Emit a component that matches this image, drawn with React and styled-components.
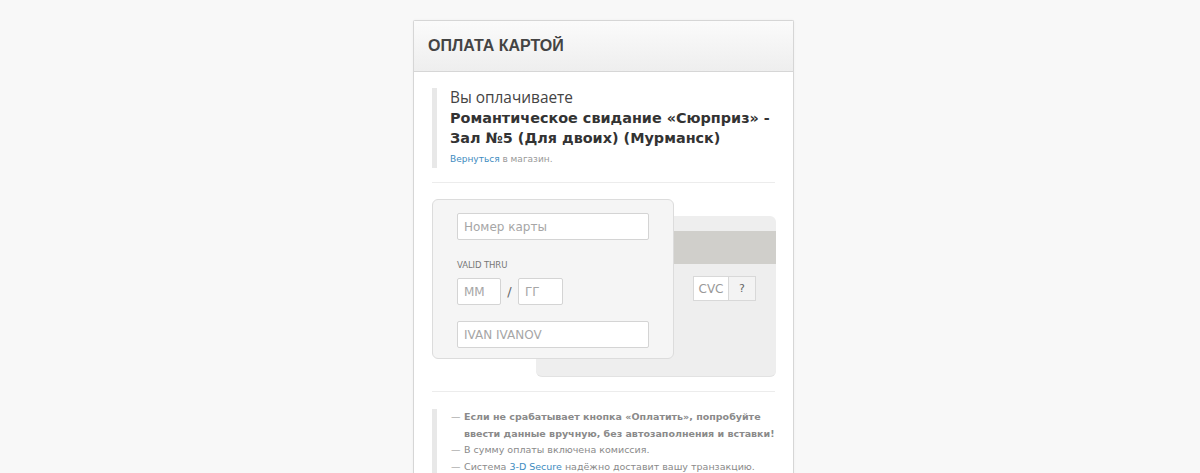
import React from 'react';
import styled, { createGlobalStyle } from 'styled-components';

const GlobalStyle = createGlobalStyle`
  html, body {
    margin: 0;
    padding: 0;
    background: #f8f8f8;
  }
  body {
    font-family: "DejaVu Sans", Verdana, sans-serif;
  }
`;

const Page = styled.div`
  display: flex;
  justify-content: center;
  padding-top: 20px;
  padding-left: 7px;
`;

const Panel = styled.div`
  width: 379px;
  background: #fff;
  border: 1px solid #d6d6d6;
  border-bottom: none;
  border-radius: 2px 2px 0 0;
  box-shadow: 0 0 3px rgba(0, 0, 0, 0.04);
`;

const Header = styled.div`
  height: 50px;
  display: flex;
  align-items: center;
  padding: 0 14px;
  background: linear-gradient(#fbfbfb, #eeeeee);
  border-bottom: 1px solid #d6d6d6;
`;

const Title = styled.h1`
  margin: 0;
  font-family: "Liberation Sans", Arial, sans-serif;
  font-size: 16px;
  font-weight: bold;
  color: #444;
`;

const Body = styled.div`
  padding: 16px 18px 0 18px;
`;

const Quote = styled.div`
  border-left: 5px solid #e8e8e8;
  padding-left: 13px;
  padding-bottom: ${(p) => p.$bottom || 0}px;
`;

const Lead = styled.div`
  font-family: "Open Sans", sans-serif;
  font-size: 15.4px;
  color: #444;
  line-height: 20px;
`;

const Product = styled.div`
  font-family: "DejaVu Sans", Verdana, sans-serif;
  font-weight: bold;
  font-size: 14.4px;
  line-height: 20px;
  color: #333;
`;

const Back = styled.div`
  margin-top: 4px;
  font-size: 9px;
  color: #999;
  line-height: 14px;
`;

const Link = styled.a`
  color: #3d8bc0;
  text-decoration: none;
`;

const Divider = styled.hr`
  border: none;
  border-top: 1px solid #ececec;
  margin: ${(p) => p.$m};
`;

const Cards = styled.div`
  display: grid;
  grid-template-columns: 1fr;
`;

const CardBack = styled.div`
  grid-area: 1 / 1;
  margin: 17px 0 0 104px;
  width: 240px;
  height: 161px;
  background: #eeeeee;
  border-radius: 6px;
  border-bottom: 1px solid #e2e2e2;
  box-sizing: border-box;
  padding-top: 15px;
  display: flex;
  flex-direction: column;
  align-items: flex-end;
`;

const Stripe = styled.div`
  align-self: stretch;
  height: 33px;
  background: #d0cfcb;
`;

const CvcRow = styled.div`
  display: flex;
  margin: 12px 20px 0 0;
`;

const CvcField = styled.div`
  width: 36px;
  height: 25px;
  box-sizing: border-box;
  border: 1px solid #d8d8d8;
  background: #fff;
  display: flex;
  align-items: center;
  justify-content: center;
  font-size: 12px;
  color: #999;
`;

const Help = styled(CvcField)`
  width: 27px;
  border-left: none;
  background: #f3f3f3;
  color: #666;
  font-size: 11px;
`;

const CardFront = styled.div`
  grid-area: 1 / 1;
  z-index: 1;
  width: 242px;
  height: 160px;
  box-sizing: border-box;
  background: #f5f5f5;
  border: 1px solid #dcdcdc;
  border-radius: 6px;
  padding: 13px 0 0 24px;
`;

const Field = styled.div`
  width: ${(p) => p.$w}px;
  height: 27px;
  box-sizing: border-box;
  border: 1px solid #d4d4d4;
  border-radius: 2px;
  background: #fff;
  display: flex;
  align-items: center;
  padding-left: 6px;
  font-size: 12px;
  color: #a6a6a6;
  margin-top: ${(p) => p.$mt || 0}px;
`;

const Label = styled.div`
  margin-top: 20px;
  font-size: 8.5px;
  color: #777;
  letter-spacing: -0.1px;
`;

const DateRow = styled.div`
  display: flex;
  align-items: center;
  margin-top: 8px;
`;

const Slash = styled.span`
  width: 17px;
  text-align: center;
  font-size: 13px;
  color: #666;
`;

const Notes = styled.ul`
  list-style: none;
  margin: 0;
  padding: 0;
`;

const Note = styled.li`
  position: relative;
  padding-left: 14px;
  font-size: 9.5px;
  line-height: 16.5px;
  color: #8a8a8a;
  font-weight: ${(p) => (p.$bold ? 'bold' : 'normal')};
  &::before {
    content: '—';
    position: absolute;
    left: 1px;
    top: 0;
    font-weight: normal;
  }
`;

export default function App() {
  return (
    <>
      <GlobalStyle />
      <Page>
        <Panel>
          <Header>
            <Title>ОПЛАТА КАРТОЙ</Title>
          </Header>
          <Body>
            <Quote $bottom={2}>
              <Lead>Вы оплачиваете</Lead>
              <Product>Романтическое свидание «Сюрприз» - Зал №5 (Для двоих) (Мурманск)</Product>
              <Back>
                <Link href="#">Вернуться</Link> в магазин.
              </Back>
            </Quote>
            <Divider $m="14px 0 16px 0" />
            <Cards>
              <CardBack>
                <Stripe />
                <CvcRow>
                  <CvcField>CVC</CvcField>
                  <Help>?</Help>
                </CvcRow>
              </CardBack>
              <CardFront>
                <Field $w={192}>Номер карты</Field>
                <Label>VALID THRU</Label>
                <DateRow>
                  <Field $w={44}>MM</Field>
                  <Slash>/</Slash>
                  <Field $w={45}>ГГ</Field>
                </DateRow>
                <Field $w={192} $mt={16}>IVAN IVANOV</Field>
              </CardFront>
            </Cards>
            <Divider $m="14px 0 17px 0" />
            <Quote>
              <Notes>
                <Note $bold>Если не срабатывает кнопка «Оплатить», попробуйте ввести данные вручную, без автозаполнения и вставки!</Note>
                <Note>В сумму оплаты включена комиссия.</Note>
                <Note>
                  Система <Link href="#">3-D Secure</Link> надёжно доставит вашу транзакцию.
                </Note>
              </Notes>
            </Quote>
          </Body>
        </Panel>
      </Page>
    </>
  );
}
